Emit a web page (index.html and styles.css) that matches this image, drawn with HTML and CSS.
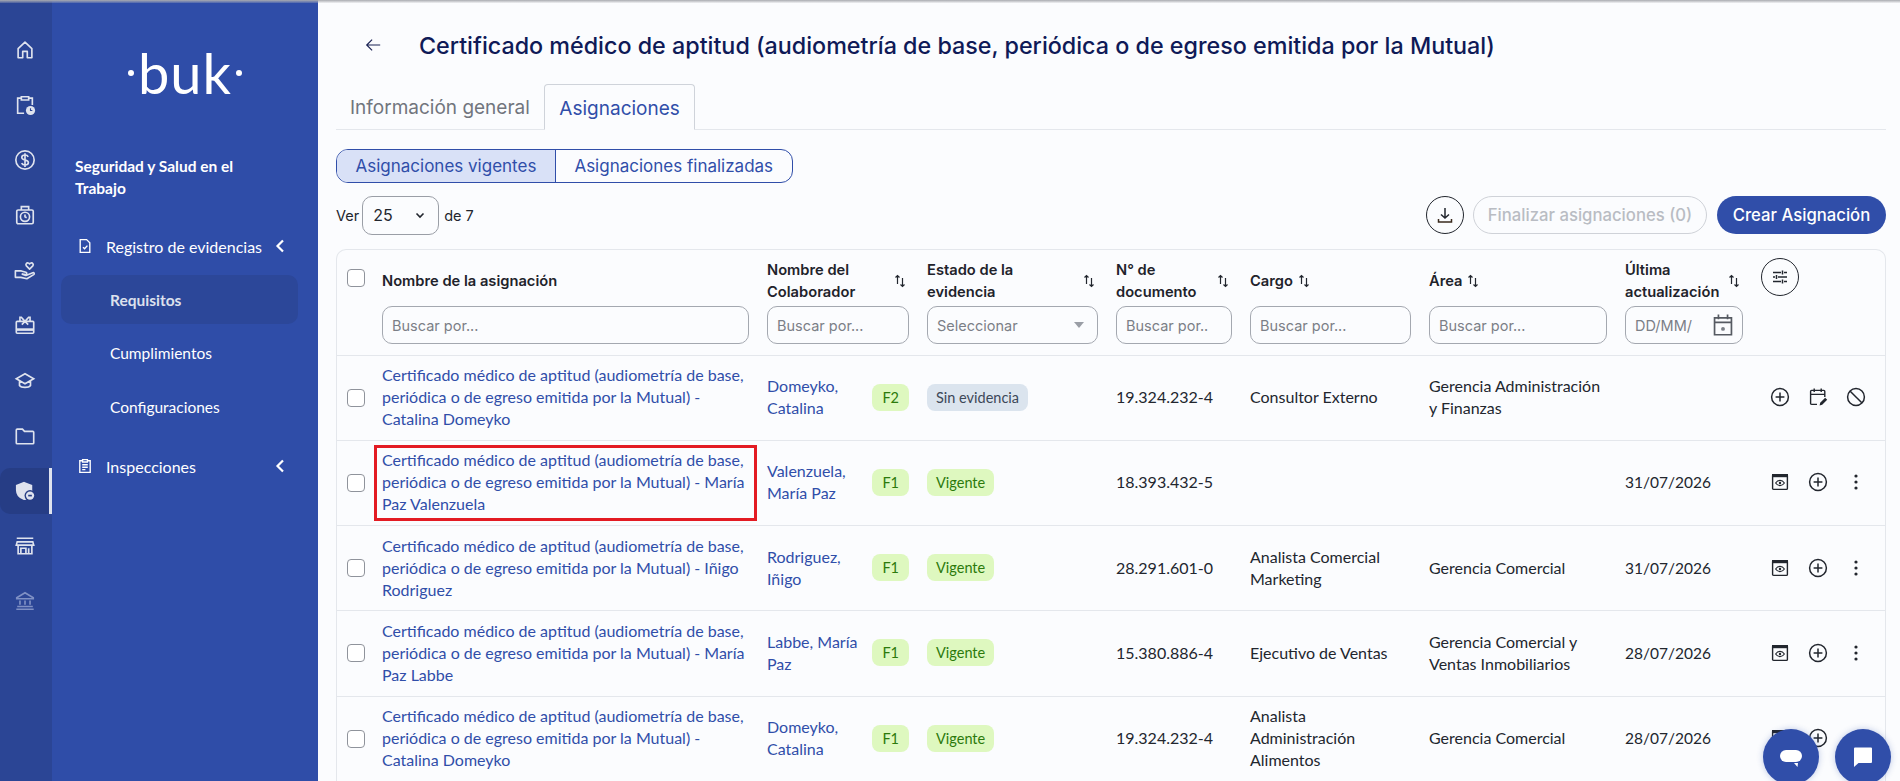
FILE: index.html
```html
<!DOCTYPE html>
<html lang="es">
<head>
  <meta charset="UTF-8">
  <title>Certificado médico de aptitud - Buk</title>
  <link rel="stylesheet" href="styles.css">
</head>
<body>
  <svg class="sprite" width="0" height="0">
    <defs>
      <symbol id="i-plus" viewBox="0 0 20 20"><circle cx="10" cy="10" r="8.4" fill="none" stroke="currentColor" stroke-width="1.5"/><path d="M10 5.6v8.8M5.6 10h8.8" fill="none" stroke="currentColor" stroke-width="1.5"/></symbol>
      <symbol id="i-eye" viewBox="0 0 20 20"><rect x="2.6" y="2.6" width="14.8" height="14.8" rx="1" fill="none" stroke="currentColor" stroke-width="1.4"/><rect x="2" y="2" width="16" height="3.2" fill="currentColor"/><path d="M5.6 11c1.2-1.8 2.7-2.6 4.4-2.6s3.2.8 4.4 2.6c-1.2 1.8-2.7 2.6-4.4 2.6S6.8 12.8 5.6 11z" fill="none" stroke="currentColor" stroke-width="1.1"/><circle cx="10" cy="11" r="1.2" fill="currentColor"/></symbol>
      <symbol id="i-dots" viewBox="0 0 20 20"><circle cx="10" cy="4" r="1.6" fill="currentColor"/><circle cx="10" cy="10" r="1.6" fill="currentColor"/><circle cx="10" cy="16" r="1.6" fill="currentColor"/></symbol>
      <symbol id="i-ban" viewBox="0 0 20 20"><circle cx="10" cy="10" r="8.4" fill="none" stroke="currentColor" stroke-width="1.5"/><path d="M4.2 4.2l11.6 11.6" fill="none" stroke="currentColor" stroke-width="1.5"/></symbol>
      <symbol id="i-caledit" viewBox="0 0 20 20"><path d="M9 17.4H3.6a1 1 0 0 1-1-1V4.4a1 1 0 0 1 1-1h12.2a1 1 0 0 1 1 1V10M2.6 7.4h14.2M6.2 1.6V5M13.2 1.6V5" fill="none" stroke="currentColor" stroke-width="1.4"/><path d="M11.600 18.400l.6-2.600 5-5 2 2-5 5z" fill="currentColor"/></symbol>
      <symbol id="i-sort" viewBox="0 0 14 14"><path d="M4.500 10V1.500M2.500 3.500l2-2 2 2M9.500 4v8.500M7.500 10.500l2 2 2-2" fill="none" stroke="currentColor" stroke-width="1.200"/></symbol>
    </defs>
  </svg>

  <nav class="rail">
    <a class="rail-item"><svg viewBox="0 0 24 24"><path d="M4.500 20.500V10.500L12 3.500l7.500 7v10h-5v-7h-5v7z" stroke-linejoin="round"/></svg></a>
    <a class="rail-item"><svg viewBox="0 0 24 24"><path d="M11 21H4V4.500h4M16 4.500h4V12M8 3h8v3.500H8z"/><circle cx="18" cy="18" r="5" fill="currentColor" stroke="none"/><path d="M18 15.500V18h2" stroke="#2b4595" stroke-width="1.200"/></svg></a>
    <a class="rail-item"><svg viewBox="0 0 24 24"><circle cx="12" cy="12" r="10"/><path d="M15.500 8.500c-.6-1.300-1.900-2-3.500-2-2 0-3.500 1-3.500 2.700 0 3.800 7.200 1.800 7.200 5.600 0 1.700-1.600 2.700-3.700 2.700-1.700 0-3.100-.8-3.700-2.100M12 4.500v15"/></svg></a>
    <a class="rail-item"><svg viewBox="0 0 24 24"><rect x="3" y="6.500" width="18" height="15" rx="1.500"/><path d="M8 6.500V2.800h8v3.700"/><circle cx="12" cy="14" r="5"/><path d="M12 11.500V14l1.800 1"/></svg></a>
    <a class="rail-item"><svg viewBox="0 0 24 24"><path d="M17 11l-3.500-3.500c-1.300-1.600.3-3.800 2.100-3.100.6.200 1 .6 1.400 1 .3-.4.800-.8 1.400-1 1.800-.7 3.400 1.500 2.100 3.100zM1.500 13h6.500l5 1.500c1.500.5 1 2.600-.5 2.400L9 16.500l4 1.500 7.500-3c1.500-.4 2.200 1.200 1 2L14 21.500 7.500 20H1.500z" stroke-linejoin="round"/></svg></a>
    <a class="rail-item"><svg viewBox="0 0 24 24"><rect x="2.500" y="8" width="19" height="13" rx="1"/><path d="M2.500 17h19" stroke-width="2.800"/><path d="M12 8L8 3.500h-1.500V8M12 8l4-4.500h1.500V8M12 8L8.500 11.500M12 8l3.500 3.500"/></svg></a>
    <a class="rail-item"><svg viewBox="0 0 24 24"><path d="M12 4L2.500 9.500 12 15l9.500-5.500zM6 12v5c2 2.700 10 2.700 12 0v-5"/></svg></a>
    <a class="rail-item"><svg viewBox="0 0 24 24"><path d="M2.500 5.500a1 1 0 0 1 1-1h5.700l2.300 2.500h9a1 1 0 0 1 1 1V19.500a1 1 0 0 1-1 1h-17a1 1 0 0 1-1-1z"/></svg></a>
    <a class="rail-item active"><svg viewBox="0 0 24 24"><path d="M11 3l8 3v5a8 8 0 0 1-8 10c-5-1.500-8-5.500-8-10V6z" fill="currentColor"/><circle cx="17.500" cy="17" r="6" fill="#263d85" stroke="none"/><circle cx="17.500" cy="17" r="4.500" fill="currentColor" stroke="none"/><path d="M15.500 17h4" stroke="#263d85"/></svg></a>
    <a class="rail-item"><svg viewBox="0 0 24 24"><path d="M3 3.500h18M3.500 7.500h17l1 3.500H2.500zM4.500 11v9.500h15V11M7.500 20.500v-6h5.500v6M16 14.500v6"/></svg></a>
    <a class="rail-item muted"><svg viewBox="0 0 24 24"><path d="M3 8.500L12 3l9 5.500v1H3zM2.500 21h19M3.500 18h17M6.500 11.500V16M12 11.500V16M17.500 11.500V16"/></svg></a>
  </nav>

  <aside class="sidebar">
    <div class="logo"><i class="logo-dot"></i><span>buk</span><i class="logo-dot"></i></div>
    <h3 class="module">Seguridad y Salud en el Trabajo</h3>
    <ul class="menu">
      <li class="menu-group">
        <svg class="menu-icon" viewBox="0 0 20 20"><path d="M4 2h8l4 4v12H4zM7.500 11.500l2 2 3.500-4"/></svg>
        <span>Registro de evidencias</span>
        <svg class="chev" viewBox="0 0 10 14"><path d="M8 1.500L2.500 7 8 12.500"/></svg>
      </li>
      <li class="menu-sub current">Requisitos</li>
      <li class="menu-sub">Cumplimientos</li>
      <li class="menu-sub">Configuraciones</li>
      <li class="menu-group inspect">
        <svg class="menu-icon" viewBox="0 0 20 20"><path d="M7 3.500H3.500V18h13V3.500H13M7 2h6v3H7zM6.500 8.500h7M6.500 11.500h7M6.500 14.500h4"/></svg>
        <span>Inspecciones</span>
        <svg class="chev" viewBox="0 0 10 14"><path d="M8 1.500L2.500 7 8 12.500"/></svg>
      </li>
    </ul>
  </aside>

  <main class="content">
    <header class="page-head">
      <svg class="back" viewBox="0 0 20 20"><path d="M18 10H3M9 4l-6 6 6 6"/></svg>
      <h1>Certificado médico de aptitud (audiometría de base, periódica o de egreso emitida por la Mutual)</h1>
    </header>

    <div class="tabs">
      <a class="tab">Información general</a>
      <a class="tab selected">Asignaciones</a>
    </div>

    <div class="segment">
      <a class="seg on">Asignaciones vigentes</a>
      <a class="seg">Asignaciones finalizadas</a>
    </div>

    <div class="toolbar">
      <div class="pager">
        <span>Ver</span>
        <div class="page-select">25 <svg viewBox="0 0 12 12"><path d="M2.500 4.500L6 8l3.500-3.500"/></svg></div>
        <span class="page-total">de 7</span>
      </div>
      <div class="tool-actions">
        <button class="round"><svg viewBox="0 0 20 20"><path d="M10 3v10M6 9.500l4 3.500 4-3.500"/><path class="orange" d="M3.500 14v3h13v-3"/></svg></button>
        <button class="btn ghost">Finalizar asignaciones (0)</button>
        <button class="btn solid">Crear Asignación</button>
      </div>
    </div>

    <div class="card">
      <table class="grid">
        <colgroup>
          <col class="c-check"><col class="c-name"><col class="c-colab"><col class="c-state"><col class="c-doc"><col class="c-cargo"><col class="c-area"><col class="c-date"><col>
        </colgroup>
        <thead>
          <tr class="labels">
            <th><span class="check head-check"></span></th>
            <th>Nombre de la asignación</th>
            <th><div class="th-sort spread"><span>Nombre del Colaborador</span><svg><use href="#i-sort"/></svg></div></th>
            <th><div class="th-sort spread"><span>Estado de la evidencia</span><svg><use href="#i-sort"/></svg></div></th>
            <th><div class="th-sort spread"><span>N° de documento</span><svg><use href="#i-sort"/></svg></div></th>
            <th><div class="th-sort"><span>Cargo</span><svg><use href="#i-sort"/></svg></div></th>
            <th><div class="th-sort"><span>Área</span><svg><use href="#i-sort"/></svg></div></th>
            <th><div class="th-sort spread"><span>Última actualización</span><svg><use href="#i-sort"/></svg></div></th>
            <th class="th-tune" rowspan="2"><button class="round"><svg viewBox="0 0 20 20"><path d="M3 5.500h8M14 5.500h3M12.500 3.500v4M3 10h2M8 10h9M6.500 8v4M3 14.500h8M14 14.500h3M12.500 12.500v4"/></svg></button></th>
          </tr>
          <tr class="filters">
            <th></th>
            <th><div class="field">Buscar por...</div></th>
            <th><div class="field">Buscar por...</div></th>
            <th><div class="field select">Seleccionar<i class="caret"></i></div></th>
            <th><div class="field">Buscar por..</div></th>
            <th><div class="field">Buscar por...</div></th>
            <th><div class="field">Buscar por...</div></th>
            <th><div class="field date"><span class="clip-text">DD/MM/</span><svg viewBox="0 0 20 20"><path d="M3.500 4.500h13v13h-13zM3.500 8h13M6.500 2v3.500M13.500 2v3.500"/><circle cx="10" cy="13" r="1.500" fill="currentColor" stroke="none"/></svg></div></th>
          </tr>
        </thead>
        <tbody>
          <tr>
            <td><span class="check"></span></td>
            <td><a class="link">Certificado médico de aptitud (audiometría de base, periódica o de egreso emitida por la Mutual) - Catalina Domeyko</a></td>
            <td><div class="colab"><a class="link">Domeyko, Catalina</a><span class="tag ok">F2</span></div></td>
            <td><span class="tag none">Sin evidencia</span></td>
            <td>19.324.232-4</td>
            <td>Consultor Externo</td>
            <td>Gerencia Administración y Finanzas</td>
            <td class="day"></td>
            <td><div class="acts"><svg><use href="#i-plus"/></svg><svg><use href="#i-caledit"/></svg><svg><use href="#i-ban"/></svg></div></td>
          </tr>
          <tr>
            <td><span class="check"></span></td>
            <td class="marked"><a class="link">Certificado médico de aptitud (audiometría de base, periódica o de egreso emitida por la Mutual) - María Paz Valenzuela</a></td>
            <td><div class="colab"><a class="link">Valenzuela, María Paz</a><span class="tag ok">F1</span></div></td>
            <td><span class="tag ok">Vigente</span></td>
            <td>18.393.432-5</td>
            <td></td>
            <td></td>
            <td class="day">31/07/2026</td>
            <td><div class="acts"><svg><use href="#i-eye"/></svg><svg><use href="#i-plus"/></svg><svg><use href="#i-dots"/></svg></div></td>
          </tr>
          <tr>
            <td><span class="check"></span></td>
            <td><a class="link">Certificado médico de aptitud (audiometría de base, periódica o de egreso emitida por la Mutual) - Iñigo Rodriguez</a></td>
            <td><div class="colab"><a class="link">Rodriguez, Iñigo</a><span class="tag ok">F1</span></div></td>
            <td><span class="tag ok">Vigente</span></td>
            <td>28.291.601-0</td>
            <td>Analista Comercial Marketing</td>
            <td>Gerencia Comercial</td>
            <td class="day">31/07/2026</td>
            <td><div class="acts"><svg><use href="#i-eye"/></svg><svg><use href="#i-plus"/></svg><svg><use href="#i-dots"/></svg></div></td>
          </tr>
          <tr>
            <td><span class="check"></span></td>
            <td><a class="link">Certificado médico de aptitud (audiometría de base, periódica o de egreso emitida por la Mutual) - María Paz Labbe</a></td>
            <td><div class="colab"><a class="link">Labbe, María Paz</a><span class="tag ok">F1</span></div></td>
            <td><span class="tag ok">Vigente</span></td>
            <td>15.380.886-4</td>
            <td>Ejecutivo de Ventas</td>
            <td>Gerencia Comercial y Ventas Inmobiliarios</td>
            <td class="day">28/07/2026</td>
            <td><div class="acts"><svg><use href="#i-eye"/></svg><svg><use href="#i-plus"/></svg><svg><use href="#i-dots"/></svg></div></td>
          </tr>
          <tr>
            <td><span class="check"></span></td>
            <td><a class="link">Certificado médico de aptitud (audiometría de base, periódica o de egreso emitida por la Mutual) - Catalina Domeyko</a></td>
            <td><div class="colab"><a class="link">Domeyko, Catalina</a><span class="tag ok">F1</span></div></td>
            <td><span class="tag ok">Vigente</span></td>
            <td>19.324.232-4</td>
            <td>Analista Administración Alimentos</td>
            <td>Gerencia Comercial</td>
            <td class="day">28/07/2026</td>
            <td><div class="acts"><svg><use href="#i-eye"/></svg><svg><use href="#i-plus"/></svg><svg><use href="#i-dots"/></svg></div></td>
          </tr>
        </tbody>
      </table>
    </div>
  </main>

  <div class="chat-btns">
    <button class="chat"><svg viewBox="0 0 24 24"><rect x="1" y="5" width="22" height="12" rx="6" fill="#fff"/><path d="M15 18h4l-.5 4z" fill="#fff"/></svg></button>
    <button class="chat"><svg viewBox="0 0 24 24"><path d="M3 3.500a1 1 0 0 1 1-1h16a1 1 0 0 1 1 1V17a1 1 0 0 1-1 1H7.500L3 22z" fill="#fff"/></svg></button>
  </div>
</body>
</html>
```

FILE: styles.css
```css
:root {
  --rail: #2b4595;
  --side: #2f4da8;
  --blue: #304ea9;
  --navy: #0f1a57;
  --line: #e4e7ec;
  --text: #22262e;
}

* {
  box-sizing: border-box;
}

html, body {
  height: 781px;
  overflow: hidden;
}

body {
  margin: 0;
  display: flex;
  font-family: "Lato", "Open Sans", sans-serif;
  font-size: 16px;
  color: var(--text);
  background: #fbfcfe;
}

/* grey edge of the browser chrome */
body::before {
  content: "";
  position: absolute;
  top: 0;
  left: 0;
  right: 0;
  height: 3px;
  background: linear-gradient(#a9abb0, rgba(200, 200, 204, 0.2));
  z-index: 5;
}

.sprite {
  position: absolute;
}

/* icon rail */
.rail {
  width: 52px;
  flex: none;
  background: var(--rail);
  padding-top: 27px;
  display: flex;
  flex-direction: column;
  gap: 9.1px;
}

.rail-item {
  height: 46px;
  display: flex;
  align-items: center;
  justify-content: center;
  color: #dfe3ee;
  padding-right: 2px;
}

.rail-item svg {
  width: 22px;
  height: 22px;
  fill: none;
  stroke: currentColor;
  stroke-width: 1.8;
}

.rail-item.active {
  background: #263d85;
  border-radius: 10px 0 0 10px;
  border-right: 3px solid #dfe3ee;
  padding-right: 0;
}

.rail-item.muted {
  color: #7f90c4;
}

/* module sidebar */
.sidebar {
  width: 266px;
  flex: none;
  background: var(--side);
  color: #fff;
}

.logo {
  height: 42px;
  margin-top: 52px;
  padding-left: 76px;
  display: flex;
  align-items: center;
  gap: 4px;
  font: 400 56px/42px "Lato", sans-serif;
  letter-spacing: 1px;
}

.logo-dot {
  width: 6px;
  height: 6px;
  border-radius: 50%;
  background: #fff;
}

.module {
  margin: 61px 50px 0 23px;
  font-size: 15.5px;
  font-weight: 700;
  line-height: 22px;
}

.menu {
  list-style: none;
  margin: 32px 0 0;
  padding: 0;
}

.menu-group {
  height: 30px;
  margin-left: 25px;
  margin-right: 33px;
  display: flex;
  align-items: center;
  font-size: 16px;
}

.menu-group span {
  flex: 1;
}

.menu-icon {
  width: 16px;
  height: 16px;
  margin-right: 13px;
  fill: none;
  stroke: #fff;
  stroke-width: 1.7;
}

.chev {
  width: 10px;
  height: 14px;
  fill: none;
  stroke: #fff;
  stroke-width: 2.2;
}

.menu-sub {
  height: 49px;
  margin: 0 20px 4.5px 9px;
  padding-left: 49px;
  border-radius: 10px;
  display: flex;
  align-items: center;
  font-size: 15.5px;
}

.menu-group + .menu-sub {
  margin-top: 14px;
}

.menu-sub.current {
  background: #2c4799;
  color: #dde1ed;
  font-weight: 700;
}

.menu-group.inspect {
  margin-top: 20px;
}

/* main area */
.content {
  flex: 1;
  min-width: 0;
  padding: 0 14px 0 18px;
}

.page-head {
  height: 84px;
  display: flex;
  align-items: center;
  padding-left: 28px;
  padding-top: 6px;
}

.back {
  width: 18px;
  height: 18px;
  fill: none;
  stroke: #1b2354;
  stroke-width: 1.3;
}

.page-head h1 {
  margin: 2px 0 0 37px;
  font: 500 23.3px/32px "Inter", sans-serif;
  color: var(--navy);
  white-space: nowrap;
}

.tabs {
  display: flex;
  height: 46px;
  border-bottom: 1px solid var(--line);
  font: 400 19px/47px "Inter", sans-serif;
}

.tab {
  padding: 0 14px;
  color: #71757d;
}

.tab.selected {
  height: 46px;
  padding: 0 14.5px;
  color: var(--blue);
  background: #fbfcfe;
  border: 1px solid #cfd3da;
  border-bottom-color: #fbfcfe;
  border-radius: 4px 4px 0 0;
}

.segment {
  display: inline-flex;
  height: 34px;
  margin-top: 19px;
  border: 1px solid var(--blue);
  border-radius: 12px;
  overflow: hidden;
  font: 400 17px/32px "Inter", sans-serif;
  color: var(--blue);
}

.seg {
  padding: 0 18.5px;
}

.seg.on {
  background: #d9e1f7;
  border-right: 1px solid var(--blue);
}

.toolbar {
  display: flex;
  justify-content: space-between;
  align-items: center;
  margin-top: 11px;
  height: 42px;
}

.pager {
  display: flex;
  align-items: center;
  gap: 3px;
  font: 400 14.5px "Inter", sans-serif;
}

.page-total {
  margin-left: 2px;
}

.page-select {
  width: 77px;
  height: 39px;
  padding: 0 12px 0 10px;
  border: 1px solid #9a9ea6;
  border-radius: 10px;
  display: flex;
  align-items: center;
  justify-content: space-between;
  font-size: 16px;
}

.page-select svg {
  width: 12px;
  height: 12px;
  fill: none;
  stroke: #22262e;
  stroke-width: 1.6;
}

.tool-actions {
  display: flex;
  align-items: center;
  gap: 10px;
}

.round {
  width: 38px;
  height: 38px;
  padding: 0;
  border: 1px solid #22262e;
  border-radius: 50%;
  background: none;
  display: flex;
  align-items: center;
  justify-content: center;
  color: #22262e;
}

.round svg {
  width: 20px;
  height: 20px;
  fill: none;
  stroke: currentColor;
  stroke-width: 1.5;
}

.round .orange {
  stroke: #3a2a1e;
}

.tool-actions .round {
  margin-right: -1px;
}

.btn {
  height: 38px;
  border-radius: 19px;
  font: 500 16.7px "Inter", sans-serif;
  padding: 0 13px;
}

.btn.ghost {
  width: 234px;
  background: none;
  border: 1px solid #cfd2d8;
  color: #b9bcc3;
}

.btn.solid {
  width: 169px;
  background: var(--blue);
  border: none;
  color: #fff;
}

/* table */
.card {
  margin-top: 13px;
  border: 1px solid var(--line);
  border-bottom: none;
  border-radius: 10px 10px 0 0;
  width: 1550px;
}

.grid {
  width: 100%;
  border-collapse: collapse;
  table-layout: fixed;
}

.c-check { width: 45px; }
.c-name { width: 385px; }
.c-colab { width: 160px; }
.c-state { width: 189px; }
.c-doc { width: 134px; }
.c-cargo { width: 179px; }
.c-area { width: 196px; }
.c-date { width: 136px; }

.grid th {
  padding: 0 18px 0 0;
  text-align: left;
  font: 600 14.7px/22px "Inter", sans-serif;
  color: #1f232b;
  vertical-align: middle;
}

.labels th {
  height: 56px;
  padding-top: 6px;
}

.filters th {
  height: 49px;
  padding-bottom: 10px;
}

.th-sort {
  display: flex;
  align-items: center;
  gap: 4px;
}

.th-sort.spread {
  justify-content: space-between;
  padding-right: 2px;
}

.th-sort.spread span {
  max-width: 100px;
}

.th-sort svg {
  width: 14px;
  height: 14px;
  flex: none;
  color: #22262e;
}

.grid .th-tune {
  vertical-align: top;
  padding: 8px 0 0 0;
}

.field {
  height: 38px;
  padding: 0 9px;
  border: 1px solid #a4a8b0;
  border-radius: 10px;
  display: flex;
  align-items: center;
  justify-content: space-between;
  font: 400 14.5px "Inter", sans-serif;
  color: #7b7f87;
  white-space: nowrap;
}

.field.date {
  padding-right: 6px;
}

.field.date svg {
  width: 26px;
  height: 26px;
  flex: none;
  fill: none;
  stroke: #565a62;
  stroke-width: 1.3;
}

.caret {
  width: 0;
  height: 0;
  margin-right: 4px;
  border: 5px solid transparent;
  border-top: 6px solid #9a9ea6;
  border-bottom: none;
}

.grid td {
  height: 85.25px;
  padding: 0 18px 1px 0;
  border-top: 1px solid var(--line);
  line-height: 22px;
  vertical-align: middle;
}

.grid td.day {
  font-size: 15.5px;
}

.check {
  display: block;
  width: 18px;
  height: 18px;
  margin: 1px 0 0 10px;
  border: 1px solid #8f939b;
  border-radius: 4px;
  background: #fff;
}

.head-check {
  margin-top: -6px;
}

.link {
  color: var(--blue);
}

.marked {
  position: relative;
}

/* red annotation box from the screenshot */
.marked::after {
  content: "";
  position: absolute;
  left: -8px;
  right: 10px;
  top: 4px;
  bottom: 4px;
  border: 3px solid #e31b23;
}

.colab {
  display: flex;
  align-items: center;
  gap: 8px;
}

.colab .link {
  flex: 1;
}

.tag {
  display: inline-block;
  height: 27px;
  padding: 0 9px;
  border-radius: 8px;
  font-size: 14.5px;
  line-height: 27px;
}

.colab .tag {
  padding: 0 10px;
}

.tag.ok {
  background: #def8bf;
  color: #2c7a0c;
}

.tag.none {
  background: #dbe4ee;
  color: #3d4858;
}

.acts {
  display: flex;
  gap: 18px;
  padding-left: 9px;
  color: #22262e;
}

.acts svg {
  width: 20px;
  height: 20px;
  flex: none;
}

.chat-btns {
  position: fixed;
  left: 1763px;
  top: 729px;
  display: flex;
  gap: 16px;
}

.chat {
  width: 56px;
  height: 56px;
  border: none;
  border-radius: 50%;
  background: var(--blue);
  display: flex;
  align-items: center;
  justify-content: center;
  box-shadow: 0 0 6px rgba(48, 78, 169, 0.3);
  padding: 0;
}

.chat svg {
  width: 24px;
  height: 24px;
}
```
